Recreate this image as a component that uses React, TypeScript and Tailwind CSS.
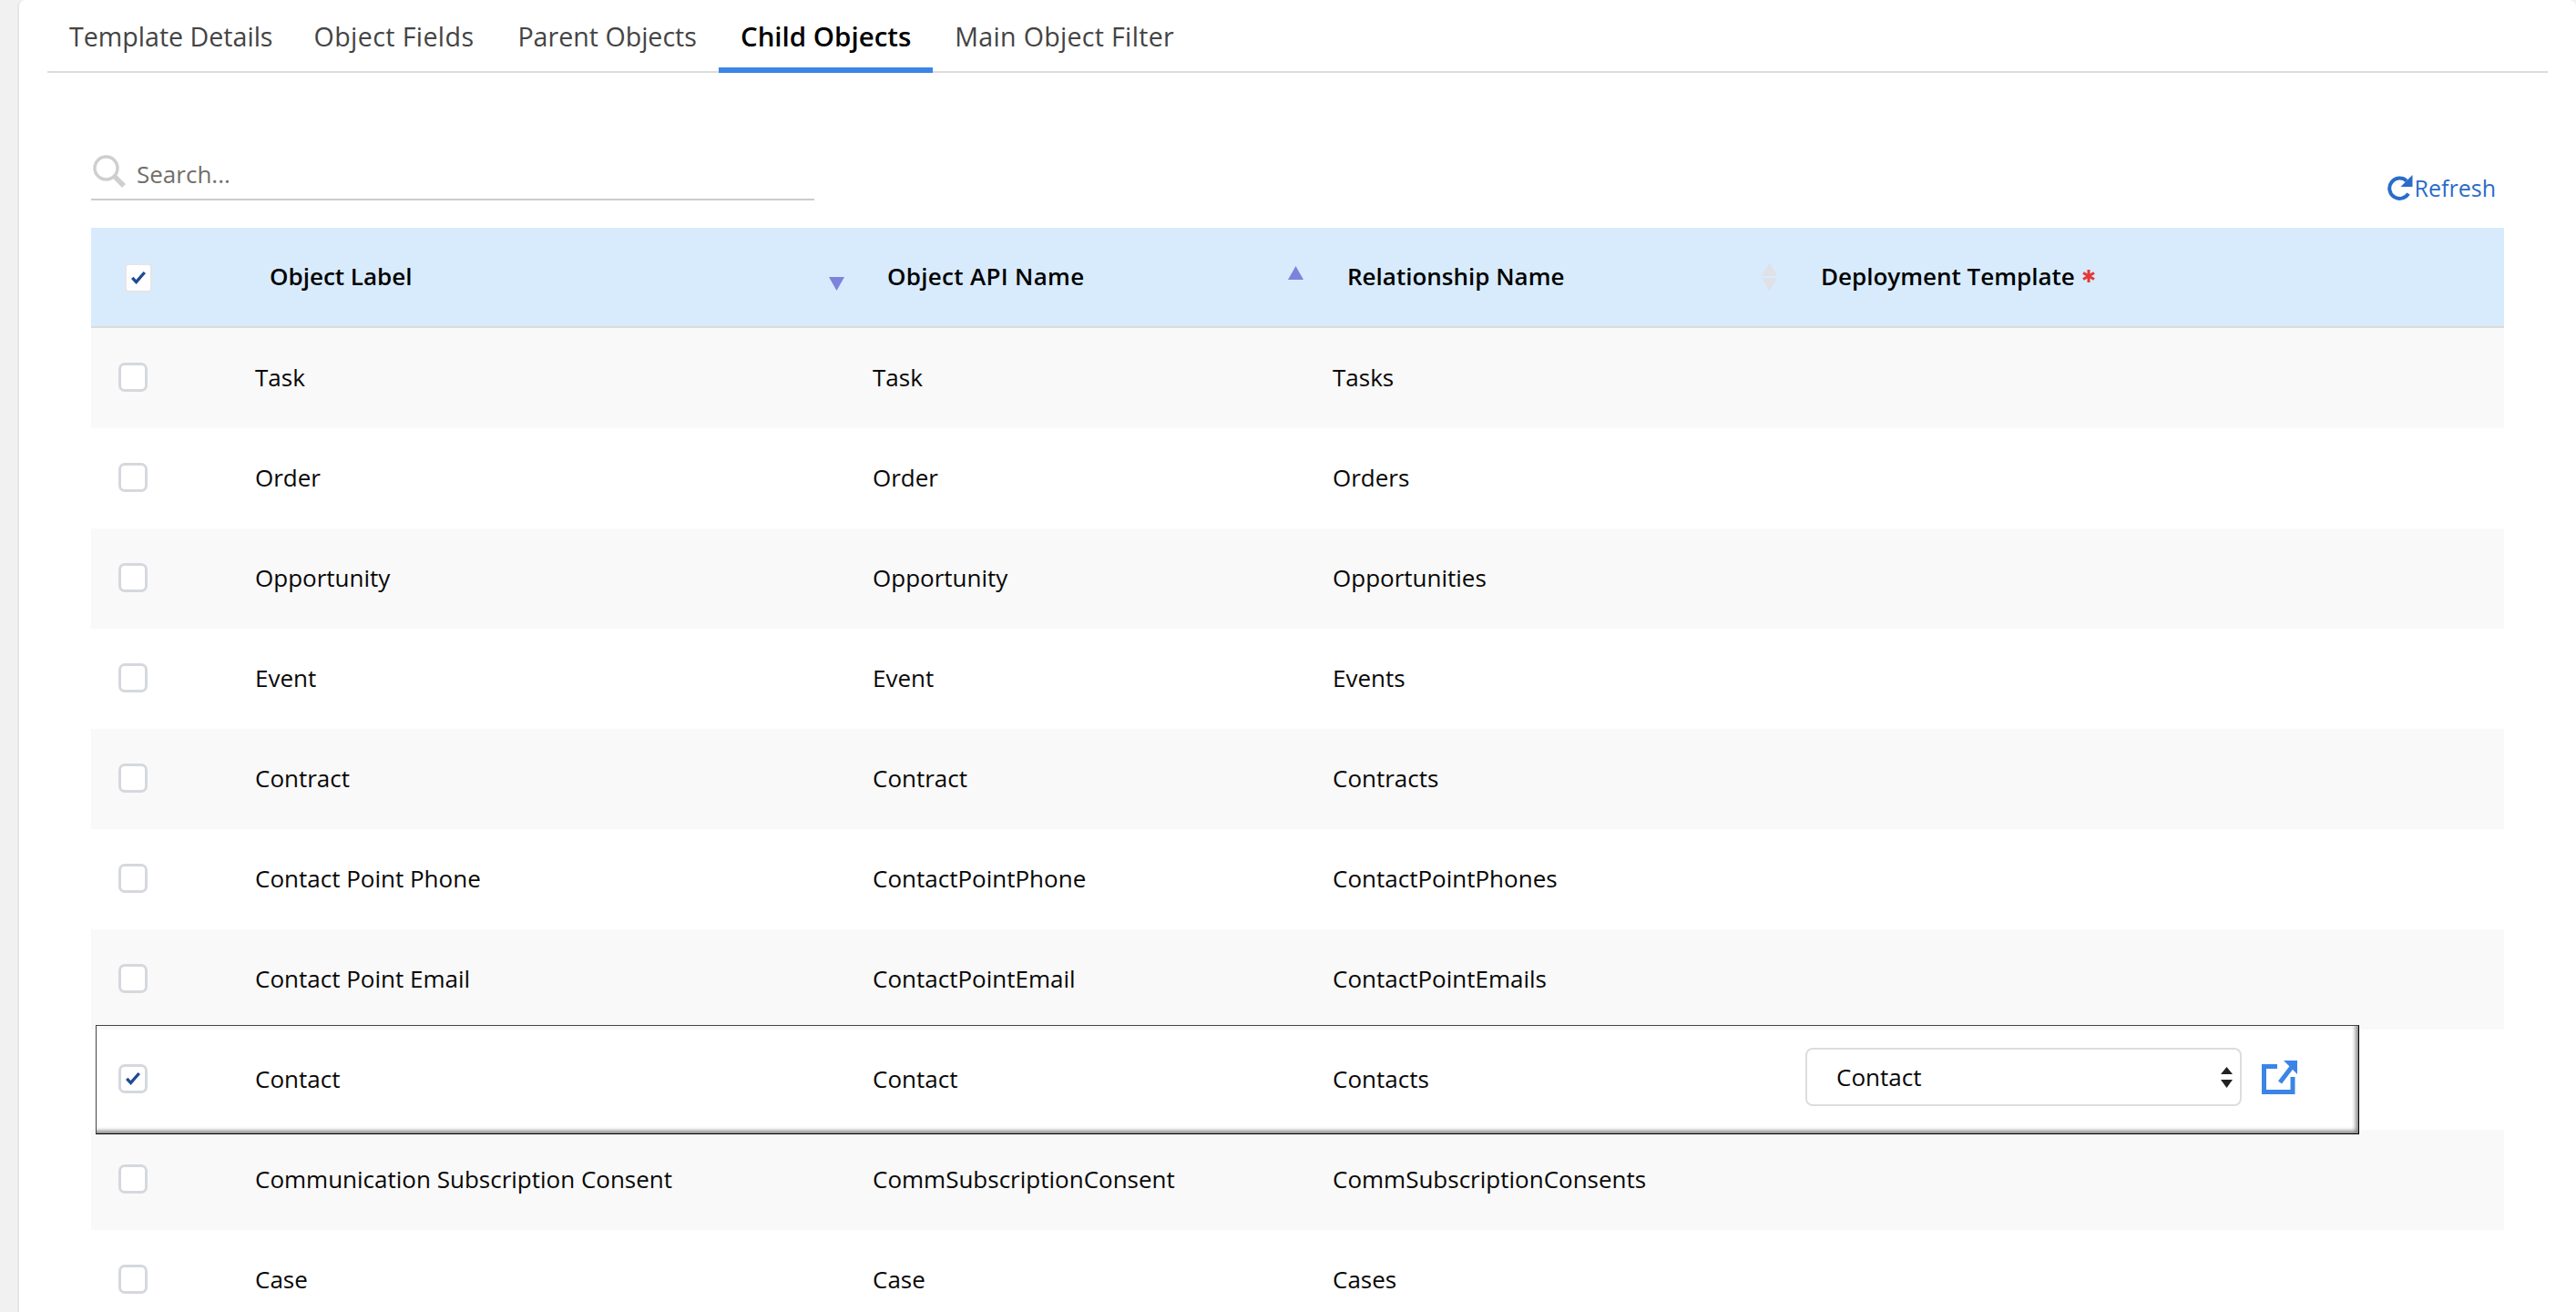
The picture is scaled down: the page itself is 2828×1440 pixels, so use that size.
const font = "font-['Open_Sans','Noto_Sans',sans-serif]";

const tabs = ['Template Details', 'Object Fields', 'Parent Objects', 'Child Objects', 'Main Object Filter'];

const rows = [
  ['Task', 'Task', 'Tasks'],
  ['Order', 'Order', 'Orders'],
  ['Opportunity', 'Opportunity', 'Opportunities'],
  ['Event', 'Event', 'Events'],
  ['Contract', 'Contract', 'Contracts'],
  ['Contact Point Phone', 'ContactPointPhone', 'ContactPointPhones'],
  ['Contact Point Email', 'ContactPointEmail', 'ContactPointEmails'],
  ['Contact', 'Contact', 'Contacts'],
  ['Communication Subscription Consent', 'CommSubscriptionConsent', 'CommSubscriptionConsents'],
  ['Case', 'Case', 'Cases'],
];

const Check = () => (
  <svg viewBox="0 0 18 16" className="h-[16px] w-[18px]">
    <path d="M1 9 L3.5 6.8 L6.5 10 L14.5 1 L17 3 L6.6 15 Z" fill="#1f4b96" />
  </svg>
);

const Checkbox = ({ checked, header }: { checked?: boolean; header?: boolean }) => (
  <div
    className={
      header
        ? 'flex h-[32px] w-[30px] items-center justify-center rounded-[4px] border-2 border-[#e3e5e8] bg-white'
        : 'flex h-[32px] w-[32px] items-center justify-center rounded-[7px] border-[3px] border-[#d5d8dd] bg-white'
    }
  >
    {checked && <Check />}
  </div>
);

const Arrow = ({ up, color }: { up?: boolean; color: string }) => (
  <svg viewBox="0 0 17 15" className="h-[15px] w-[17px] shrink-0">
    <polygon points={up ? '8.5,0 17,15 0,15' : '0,0 17,0 8.5,15'} fill={color} />
  </svg>
);

const Refresh = () => (
  <svg viewBox="0 0 28 28" className="h-[28px] w-[28px] shrink-0">
    <path d="M21 6.4 A11.2 11.2 0 1 0 23 20.5" fill="none" stroke="#2a6cc9" strokeWidth="4" />
    <polygon points="27.5,0 27.5,13 14.5,13 21,6.5" fill="#2a6cc9" />
  </svg>
);

const ExternalLink = () => (
  <svg viewBox="0 0 39 37" className="h-[37px] w-[39px] shrink-0">
    <path d="M17 6.5 H2.5 V34.5 H34 V18" fill="none" stroke="#3b85e6" strokeWidth="5" />
    <path d="M20 24 L33 7" fill="none" stroke="#3b85e6" strokeWidth="5" />
    <polygon points="24,0 39,0 39,15" fill="#3b85e6" />
  </svg>
);

const App = () => {
  return (
    <div className={`h-[1440px] w-[2828px] overflow-hidden bg-[#f1f1f1] pl-[19px] ${font}`}>
      <div className="h-[1440px] rounded-t-[8px] border-l-2 border-[#e6e6e6] bg-white pr-[31px] pl-[31px]">
        {/* Tabs */}
        <div className="flex h-[80px] border-b-2 border-[#dcdcdc]">
          {tabs.map((tab) => (
            <div
              key={tab}
              className={
                tab === 'Child Objects'
                  ? 'mb-[-2px] flex h-[80px] items-center border-b-[6px] border-[#3b85e6] px-[24px] pt-[6px] text-[29.5px] font-semibold text-black'
                  : tab === 'Template Details'
                    ? 'flex h-[78px] items-center pt-[2px] pr-[21px] pl-[24px] text-[28.6px] text-[#444]'
                    : tab === 'Object Fields'
                      ? 'flex h-[78px] items-center px-[24px] pt-[2px] text-[28.6px] tracking-[0.4px] text-[#444]'
                      : tab === 'Main Object Filter'
                        ? 'flex h-[78px] items-center px-[24px] pt-[2px] text-[28.6px] tracking-[0.3px] text-[#444]'
                        : 'flex h-[78px] items-center px-[24px] pt-[2px] text-[28.6px] text-[#444]'
              }
            >
              {tab}
            </div>
          ))}
        </div>

        <div className="pr-[48px] pl-[48px]">
          {/* Search and refresh */}
          <div className="flex h-[170px] items-end justify-between pb-[30px]">
            <div className="flex h-[60px] w-[794px] items-center gap-[12px] border-b-2 border-[#cccccc] pl-[2px]">
              <svg viewBox="0 0 36 36" className="mb-[2px] h-[36px] w-[36px]">
                <circle cx="14.5" cy="14.5" r="12.5" fill="none" stroke="#cfcfcf" strokeWidth="3.5" />
                <path d="M24 24 L34 34" stroke="#cfcfcf" strokeWidth="5.5" />
              </svg>
              <span className="pt-[4px] text-[26px] text-[#706e6b]">Search...</span>
            </div>
            <div className="mb-[-5px] mr-[9px] flex items-center gap-[2px] text-[25px] text-[#2a6cc9]">
              <Refresh />
              <span>Refresh</span>
            </div>
          </div>

          {/* Header */}
          <div className="grid h-[110px] grid-cols-[196px_678px_505px_520px_1fr] items-center border-b-2 border-[#dcdcdc] bg-[#d8ebfd] pb-[2px] text-[26px] font-semibold text-black">
            <div className="pl-[37px] pt-[4px]">
              <Checkbox checked header />
            </div>
            <div className="flex items-center justify-between pr-[47px]">
              <span>Object Label</span>
              <div className="mt-[16px]">
                <Arrow color="#7b83dc" />
              </div>
            </div>
            <div className="flex items-center justify-between pr-[48px]">
              <span className="tracking-[0.3px]">Object API Name</span>
              <div className="mb-[8px]">
                <Arrow up color="#7b83dc" />
              </div>
            </div>
            <div className="flex items-center justify-between pr-[48px]">
              <span>Relationship Name</span>
              <div className="flex flex-col gap-[2px] pt-[2px]">
                <Arrow up color="#dfe1e6" />
                <Arrow color="#dfe1e6" />
              </div>
            </div>
            <div className="flex items-center gap-[8px]">
              <span>Deployment Template</span>
              <svg viewBox="0 0 14 14" className="h-[14px] w-[14px]">
                <path d="M7 0 V14 M1 3.5 L13 10.5 M13 3.5 L1 10.5" stroke="#e53935" strokeWidth="3" />
              </svg>
            </div>
          </div>

          {/* Rows */}
          {rows.map((row, i) => {
            const selected = row[0] === 'Contact';
            return (
              <div
                key={row[0]}
                className={
                  i % 2 === 0
                    ? 'relative grid h-[110px] grid-cols-[180px_678px_505px_519px_1fr] items-center bg-[#f9f9f9] pb-[2px] text-[26px] text-[#080707]'
                    : 'relative grid h-[110px] grid-cols-[180px_678px_505px_519px_1fr] items-center bg-white pb-[2px] text-[26px] text-[#080707]'
                }
              >
                <div className="pl-[30px]">
                  <Checkbox checked={selected} />
                </div>
                <div>{row[0]}</div>
                <div>{row[1]}</div>
                <div>{row[2]}</div>
                {selected && (
                  <div className="flex items-center gap-[22px] pb-[4px]">
                    <div className="flex h-[64px] w-[479px] items-center justify-between rounded-[8px] border-2 border-[#dddddd] bg-white pr-[8px] pl-[32px]">
                      <span>Contact</span>
                      <div className="flex flex-col gap-[6px]">
                        <svg viewBox="0 0 13 8" className="h-[8px] w-[13px]">
                          <polygon points="6.5,0 13,8 0,8" fill="#222" />
                        </svg>
                        <svg viewBox="0 0 13 9" className="h-[9px] w-[13px]">
                          <polygon points="0,0 13,0 6.5,9" fill="#222" />
                        </svg>
                      </div>
                    </div>
                    <ExternalLink />
                  </div>
                )}
                {selected && (
                  <div className="pointer-events-none absolute top-[-5px] bottom-[-5px] left-[5px] z-10 w-[2485px] border border-t-[#444] border-r-black border-b-black border-l-[#444] shadow-[inset_-4px_-4px_4px_-1px_#8a8a8a]" />
                )}
              </div>
            );
          })}
        </div>
      </div>
    </div>
  );
};

export default App;
